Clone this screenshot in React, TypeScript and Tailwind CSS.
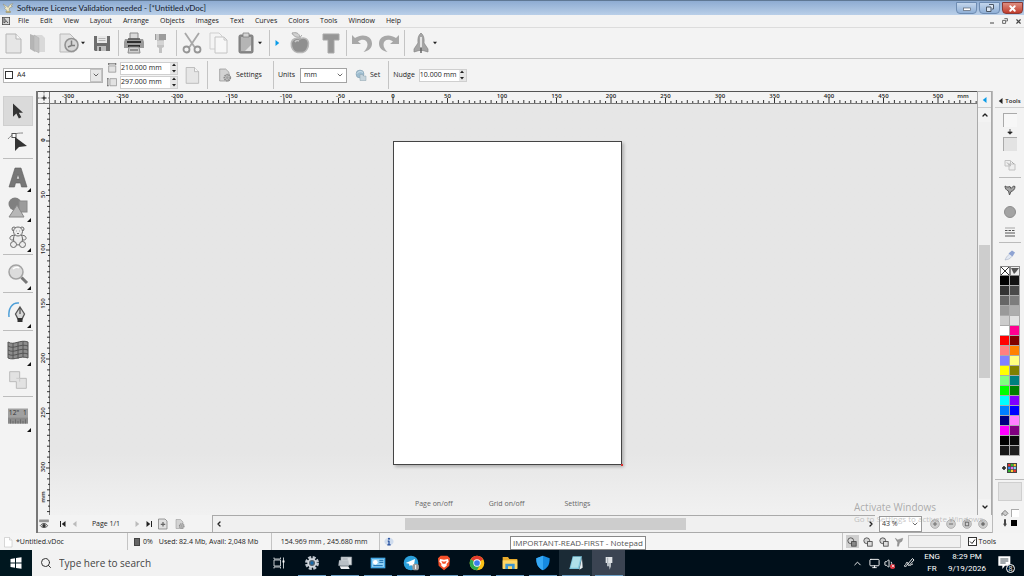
import { useState, type ReactNode } from "react";
import { Search, ChevronUp, ChevronDown, ChevronLeft, ChevronRight, X, Monitor, Volume1 } from "lucide-react";

// pixels per millimetre at 43 % zoom
const MM = 1.09;

const menus = ["File", "Edit", "View", "Layout", "Arrange", "Objects", "Images", "Text", "Curves", "Colors", "Tools", "Window", "Help"];

const swatches = [
    "#000000", "#141414", "#333333", "#4a4a4a", "#666666", "#7d7d7d", "#999999", "#adadad", "#cccccc", "#e2e2e2",
    "#ffffff", "#ff0090", "#ff0000", "#800000", "#ff8080", "#ff8000", "#8080ff", "#ffff80", "#ffff00", "#808000",
    "#80ff80", "#008080", "#00ff00", "#008000", "#00ffff", "#8000ff", "#0080ff", "#0000ff", "#000080", "#ff80ff",
    "#ff00ff", "#800080", "#000000", "#0a0a0a", "#171717", "#202020",
];

function Svg({ children, className = "size-6", box = "0 0 24 24" }: { children: ReactNode; className?: string; box?: string }) {
    return (
        <svg viewBox={box} className={`shrink-0 ${className}`} fill="none" aria-hidden="true">
            {children}
        </svg>
    );
}

/* ---------- icons ---------- */

const PageIcon = ({ className = "size-6", fill = "#e6e6e6" }: { className?: string; fill?: string }) => (
    <Svg className={className}>
        <path d="M5 3h10l5 5v14H5z" fill={fill} stroke="#b5b5b5" />
        <path d="M15 3v5h5" fill="#f6f6f6" stroke="#b5b5b5" />
    </Svg>
);

const OpenIcon = () => (
    <Svg>
        <path d="M4 3l5 2v16l-5-3z" fill="#b5b5b5" />
        <path d="M8 4h8l3 3v14H9z" fill="#d9d9d9" />
        <path d="M8 4l5 3v15l-5-3z" fill="#c2c2c2" stroke="#adadad" strokeWidth=".5" />
    </Svg>
);

const TemplateIcon = () => (
    <Svg>
        <path d="M3 3h10l4 4v14H3z" fill="#e4e4e4" stroke="#b9b9b9" />
        <circle cx="14.5" cy="14" r="6.5" fill="#d6d6d6" stroke="#949494" strokeWidth="1.6" />
        <path d="M14.5 9.5v5H18M14.5 14.5L11 16" stroke="#7d7d7d" strokeWidth="1.5" />
    </Svg>
);

const SaveIcon = () => (
    <Svg>
        <path d="M4 5h16v15H5l-1-1z" fill="#6d6d6d" />
        <path d="M7 5h10v7H7z" fill="#e9e9e9" />
        <path d="M8.5 7.5h7M8.5 9.5h7" stroke="#b5b5b5" />
        <path d="M7 15h9v5H7z" fill="#bcbcbc" />
        <path d="M9 16h2v4H9z" fill="#5d5d5d" />
    </Svg>
);

const PrintIcon = () => (
    <Svg>
        <path d="M8 2h8v6H8z" fill="#dadada" stroke="#8a8a8a" />
        <path d="M3 8h18l1 3v6H2v-6z" fill="#9b9b9b" />
        <path d="M5 10h14v2H5zM6 14h12v2H6z" fill="#2e2e2e" />
        <path d="M7 16h10l1 6H6z" fill="#cdcdcd" stroke="#8a8a8a" />
        <path d="M8 19h8" stroke="#555" />
        <path d="M6 8h12" stroke="#555" strokeWidth="1.5" />
    </Svg>
);

const MarkerIcon = () => (
    <Svg>
        <path d="M6 3h11v6H6z" fill="#9c9c9c" />
        <path d="M7 3h3v6H7z" fill="#c9c9c9" />
        <path d="M8 9h7v7l-2 1v5h-3v-5l-2-1z" fill="#c2c2c2" />
        <path d="M8 11h7M8 13h7" stroke="#e6e6e6" />
    </Svg>
);

const CutIcon = () => (
    <Svg>
        <path d="M5 2l9.5 14M19 2L9.5 16" stroke="#a8a8a8" strokeWidth="1.8" />
        <circle cx="6.5" cy="18.5" r="3" stroke="#959595" strokeWidth="1.8" />
        <circle cx="17.5" cy="18.5" r="3" stroke="#959595" strokeWidth="1.8" />
    </Svg>
);

const CopyIcon = () => (
    <Svg>
        <path d="M3 2h9l3 3v13H3z" fill="#f4f4f4" stroke="#cfcfcf" />
        <path d="M8 6h9l3 3v13H8z" fill="#f7f7f7" stroke="#c4c4c4" />
        <path d="M17 6v3h3" stroke="#c4c4c4" />
    </Svg>
);

const PasteIcon = () => (
    <Svg>
        <rect x="5" y="4" width="14" height="18" rx="1.5" fill="#8a8a8a" stroke="#7a7a7a" />
        <path d="M7 6h10v14H7z" fill="#b5b5b5" />
        <path d="M9 2h6v4H9z" fill="#d5d5d5" stroke="#808080" strokeWidth=".8" />
        <path d="M17 14v6h-6z" fill="#e2e2e2" />
    </Svg>
);

const AppleIcon = () => (
    <Svg>
        <path d="M12 8c3-2 8-1 8.5 4 .3 5-3 9.5-6 9.5h-5C6 21.5 2.800 17 3.300 12 4 7.500 9 6.500 12 8z" fill="#8f8f8f" stroke="#b8b8b8" strokeWidth="1.5" />
        <path d="M7 11c1-1.500 3-1.500 4-1" stroke="#c9c9c9" strokeWidth="1.5" />
        <path d="M12 8c0-2 1-3 2-4M12 6C9 7 5 5 4 2c4-1 7 0 8 4z" fill="#d0d0d0" stroke="#a5a5a5" />
    </Svg>
);

const TextIcon = () => (
    <Svg>
        <path d="M4 3h16v6h-5v13H9V9H4z" fill="#969696" stroke="#a9a9a9" />
    </Svg>
);

const TurnIcon = ({ flip = false }: { flip?: boolean }) => (
    <Svg className={flip ? "size-6 -scale-x-100" : "size-6"}>
        <path d="M2 4v9h9L8 10.500c4-3 9.500-2 9.500 3 0 2.500-1.500 5-4 7.500 5.500-1 8.500-4.500 8.500-8.500C22 4.500 12 2 5 7z" fill="#a8a8a8" />
    </Svg>
);

const RocketIcon = () => (
    <Svg>
        <path d="M12 2c2.500 2 3.500 5 3 10l4 6v3l-5-1.500h-4L5 21v-3l4-6C8.500 7 9.500 4 12 2z" fill="#a5a5a5" stroke="#858585" strokeWidth=".7" />
        <path d="M11 6h2v10h-2z" fill="#e4e4e4" />
        <path d="M12 17v5" stroke="#666" strokeWidth="1.5" />
    </Svg>
);

const GearPage = ({ className = "size-5" }: { className?: string }) => (
    <Svg className={className}>
        <path d="M4 3h9l5 5v13H4z" fill="#d3d3d3" stroke="#8c8c8c" />
        <circle cx="15.5" cy="16" r="4.5" fill="#c2c2c2" stroke="#8c8c8c" strokeWidth="2.5" strokeDasharray="2.2 1" />
        <circle cx="15.5" cy="16" r="2" fill="#a2a2a2" />
    </Svg>
);

const SetIcon = () => (
    <Svg className="size-3">
        <circle cx="10" cy="10" r="8" fill="#9dbccf" stroke="#7e9aaa" />
        <path d="M4 9c3-5 9-4 12-2" stroke="#d5e6ef" strokeWidth="2" />
        <path d="M10 11h5l2 3h5v9H10z" fill="#c6d4dc" stroke="#8aa0ac" />
    </Svg>
);

const Down = () => (
    <Svg className="size-1" box="0 0 6 6"><path d="M0 1h6L3 5z" fill="#222" /></Svg>
);

const Tri = ({ dir, color = "#222", className = "size-1.5" }: { dir: "l" | "r" | "u" | "d"; color?: string; className?: string }) => {
    const d = { l: "M6 0v8L1 4z", r: "M2 0v8l5-4z", u: "M0 6h8L4 1z", d: "M0 2h8L4 7z" }[dir];
    return <Svg className={className} box="0 0 8 8"><path d={d} fill={color} /></Svg>;
};

const More = () => (
    <Svg className="absolute bottom-0 right-0.5 size-1" box="0 0 4 4"><path d="M4 0v4H0z" fill="#111" /></Svg>
);

/* ---------- small controls ---------- */

function ToolButton({ label, children, menu, className = "w-6" }: { label: string; children: ReactNode; menu?: boolean; className?: string }) {
    return (
        <button type="button" title={label} aria-label={label} className={`flex shrink-0 items-center justify-center hover:bg-[#e3e3e3] ${className}`}>
            {children}
            {menu && <Down />}
        </button>
    );
}

const Sep = () => <span className="h-full w-px shrink-0 bg-[#c4c4c4]" />;

function Spinner({ label, value, className = "w-[58px]" }: { label: string; value: string; className?: string }) {
    const [v, setV] = useState(value);
    const step = (n: number) => setV(`${(parseFloat(v) + n).toFixed(3)} mm`);
    return (
        <div className={`flex h-[13px] border border-[#cfcfcf] bg-white ${className}`}>
            <input aria-label={label} value={v} onChange={(e) => setV(e.target.value)} className="min-w-0 flex-1 bg-white outline-none" />
            <div className="flex w-[7px] flex-col items-center justify-center gap-0.5 bg-[#e6e6e6]">
                <button type="button" aria-label={`Increase ${label}`} onClick={() => step(1)} className="flex"><Tri dir="u" className="size-1" /></button>
                <button type="button" aria-label={`Decrease ${label}`} onClick={() => step(-1)} className="flex"><Tri dir="d" className="size-1" /></button>
            </div>
        </div>
    );
}

/* ---------- top bars ---------- */

function TitleBar() {
    return (
        <header className="flex h-[15px] items-center border-t border-[#5f7894] bg-linear-to-b from-[#8eacd2] to-[#b9cfe8] pl-0.5 pr-px text-[#1b2736]">
            <Svg className="size-3">
                <path d="M2 4l7 4 3 3 4-6 6-2-4 5 3 1-6 3-1 5 4 3H7l3-3-5-4 2-2z" fill="#efe9c8" stroke="#8c8a72" />
                <path d="M8 20h9" stroke="#a38d48" strokeWidth="2" />
            </Svg>
            <h1 className="flex-1 pl-[3px] font-[Lato] text-[8px] font-medium">Software License Validation needed - [*Untitled.vDoc]</h1>
            <div className="flex gap-0.5">
                <button type="button" aria-label="Minimize" className="flex h-3 w-[21px] items-center justify-center rounded-b-sm border border-[#6e8cb2] bg-linear-to-b from-[#c3d6ec] to-[#8fafd6]">
                    <Svg className="size-2.5" box="0 0 10 10"><rect x="1.5" y="5" width="7" height="2.5" fill="#fff" stroke="#59626e" strokeWidth=".7" /></Svg>
                </button>
                <button type="button" aria-label="Restore" className="flex h-3 w-[21px] items-center justify-center rounded-b-sm border border-[#6e8cb2] bg-linear-to-b from-[#c3d6ec] to-[#8fafd6]">
                    <Svg className="size-2.5" box="0 0 10 10"><path d="M4 1.500h4.500V6H7M1.500 4H6v4.500H1.500z" fill="#dce6f2" stroke="#4b5664" /></Svg>
                </button>
                <button type="button" aria-label="Close" className="flex h-3 w-[21px] items-center justify-center rounded-b-sm border border-[#8b3a35] bg-linear-to-b from-[#dd8d80] to-[#c0392b] text-white">
                    <X size={9} strokeWidth={5} />
                </button>
            </div>
        </header>
    );
}

function MenuBar() {
    return (
        <nav className="flex h-[13px] items-center border-b border-[#dcdcdc] px-0.5">
            <Svg className="size-2">
                <rect x="1" y="1" width="22" height="22" fill="#d5d5d5" stroke="#444" strokeWidth="2.5" />
                <path d="M6 4l12 14M6 4v14l6-5" stroke="#555" strokeWidth="3" />
            </Svg>
            <ul className="flex flex-1 gap-[11px] pl-2">
                {menus.map((m) => (
                    <li key={m}><button type="button" className="hover:underline">{m}</button></li>
                ))}
            </ul>
            <div className="flex items-center gap-[7px] text-[#444]">
                <button type="button" aria-label="Minimize document"><Svg className="size-1.5" box="0 0 6 6"><path d="M1 5h4" stroke="#444" /></Svg></button>
                <button type="button" aria-label="Restore document"><Svg className="size-1.5" box="0 0 10 10"><path d="M4 1h5v4H7M1 4h5v5H1z" stroke="#444" strokeWidth="1.3" /></Svg></button>
                <button type="button" aria-label="Close document"><X size={7} strokeWidth={4} /></button>
            </div>
        </nav>
    );
}

function ToolBar() {
    return (
        <div role="toolbar" aria-label="Standard" className="flex h-[31px] items-stretch border-b border-[#c6c6c6] py-0.5 pl-px">
            <div className="flex gap-px pr-1">
                <ToolButton label="New"><PageIcon /></ToolButton>
                <ToolButton label="Open"><OpenIcon /></ToolButton>
                <ToolButton label="Templates" menu className="ml-1.5 w-7"><TemplateIcon /></ToolButton>
                <ToolButton label="Save" className="ml-1 w-6"><SaveIcon /></ToolButton>
            </div>
            <Sep />
            <div className="flex gap-[3px] px-[3px]">
                <ToolButton label="Print"><PrintIcon /></ToolButton>
                <ToolButton label="Highlight"><MarkerIcon /></ToolButton>
            </div>
            <Sep />
            <div className="flex gap-[3px] pl-[3px] pr-[7px]">
                <ToolButton label="Cut"><CutIcon /></ToolButton>
                <ToolButton label="Copy"><CopyIcon /></ToolButton>
                <ToolButton label="Paste" menu className="w-7"><PasteIcon /></ToolButton>
            </div>
            <Sep />
            <div className="flex gap-[7px] px-[3px]">
                <ToolButton label="More tools" className="w-2"><Tri dir="r" color="#0a9ce8" /></ToolButton>
                <ToolButton label="Vectorize"><AppleIcon /></ToolButton>
                <ToolButton label="Recognize text"><TextIcon /></ToolButton>
            </div>
            <Sep />
            <div className="flex gap-[3px] px-[3px]">
                <ToolButton label="Undo"><TurnIcon /></ToolButton>
                <ToolButton label="Redo"><TurnIcon flip /></ToolButton>
            </div>
            <Sep />
            <ToolButton label="Launch" menu className="ml-1 w-7"><RocketIcon /></ToolButton>
        </div>
    );
}

function PropertyBar() {
    return (
        <div role="toolbar" aria-label="Page properties" className="flex h-8 items-center py-0.5">
            <div className="ml-[3px] flex h-[15px] w-[100px] items-center border border-[#b5b5b5] bg-white">
                <span className="ml-px h-2 w-2 border border-[#333]" />
                <select aria-label="Page size" className="h-full flex-1 appearance-none bg-transparent pl-1 outline-none"><option>A4</option></select>
                <span className="pointer-events-none flex h-full w-3 items-center justify-center border border-[#c4c4c4] bg-[#e8e8e8]"><ChevronDown size={8} /></span>
            </div>
            <div className="ml-1 flex flex-col gap-1">
                <Svg className="size-2.5"><path d="M4 7h17v15H4z" fill="#e2e2e2" stroke="#999" strokeWidth="2" /><path d="M4 2h17M4 0v5M21 0v5" stroke="#555" strokeWidth="2" /></Svg>
                <Svg className="size-2.5"><path d="M7 4h16v17H7z" fill="#e2e2e2" stroke="#999" strokeWidth="2" /><path d="M2 4v17M0 4h4M0 21h4" stroke="#555" strokeWidth="2" /></Svg>
            </div>
            <div className="ml-[3px] flex flex-col gap-px">
                <Spinner label="Page width" value="210.000 mm" />
                <Spinner label="Page height" value="297.000 mm" />
            </div>
            <ToolButton label="Orientation" className="ml-0.5 mr-[3px] w-6"><PageIcon className="size-5" /></ToolButton>
            <Sep />
            <button type="button" className="flex items-center gap-[3px] pl-[9px] pr-[11px]"><GearPage className="size-4" />Settings</button>
            <Sep />
            <label htmlFor="units" className="pl-1 pr-[5px]">Units</label>
            <div className="relative flex h-[15px] w-[47px] items-center border border-[#a3a3a3] bg-white">
                <select id="units" className="h-full w-full appearance-none bg-transparent pl-[3px] outline-none"><option>mm</option><option>cm</option></select>
                <ChevronDown size={8} className="pointer-events-none absolute right-0.5" />
            </div>
            <button type="button" className="flex items-center gap-[3px] px-2"><SetIcon />Set</button>
            <Sep />
            <span className="px-1">Nudge</span>
            <Spinner label="Nudge" value="10.000 mm" className="w-12" />
        </div>
    );
}

/* ---------- left toolbox ---------- */

const toolGroups: { label: string; h: string; more?: boolean; icon: ReactNode }[][] = [
    [
        { label: "Select", h: "h-[30px]", icon: <Svg className="size-5"><path d="M6 3v16l4-4 3 6 3-1.500-3-5.500h5z" fill="#333" /></Svg> },
        { label: "Edit nodes", h: "h-[30px]", icon: <Svg><path d="M2 10c4-5 8-6 15-6" stroke="#888" /><rect x="6" y="4.5" width="4" height="4" fill="#fff" stroke="#555" /><path d="M9 8v14l4-4 8-1z" fill="#333" /></Svg> },
    ],
    [
        { label: "Text", h: "h-[30px]", more: true, icon: <Svg><path d="M9 3h6l6 19h-5.500l-1-4H9.500l-1 4H3zM12 9l-1.500 5h3z" fill="#777" stroke="#5d5d5d" strokeWidth=".6" /></Svg> },
        { label: "Shapes", h: "h-[30px]", more: true, icon: <Svg><circle cx="9" cy="9" r="6.5" fill="#808080" /><rect x="13" y="6" width="8" height="11" fill="#9b9b9b" stroke="#888" /><path d="M11 10l7 12H3z" fill="#b7b7b7" stroke="#888" /></Svg> },
        { label: "Cliparts", h: "h-[30px]", more: true, icon: (
            <Svg>
                <g stroke="#6a6a6a" fill="#ededed">
                    <circle cx="8" cy="4" r="2" /><circle cx="16" cy="4" r="2" />
                    <path d="M8 10l-3 1c-2 2-1 4 1 4h3M16 10l3 1c2 2 1 4-1 4h-3" />
                    <ellipse cx="12" cy="14" rx="4.5" ry="6" /><circle cx="12" cy="6.5" r="4.5" />
                    <circle cx="7.5" cy="19.5" r="3" /><circle cx="16.5" cy="19.5" r="3" />
                    <path d="M10 6h.5M13.500 6h.5M11 8.500h2" />
                </g>
            </Svg>
        ) },
    ],
    [
        { label: "Zoom", h: "h-8", more: true, icon: <Svg><circle cx="10" cy="10" r="7" fill="#dcdcdc" stroke="#a3a3a3" strokeWidth="1.5" /><path d="M7 7c2-2 5-2 6-1" stroke="#fff" strokeWidth="1.5" /><path d="M15.500 15.500l5.500 5.500" stroke="#777" strokeWidth="3" /></Svg> },
    ],
    [
        { label: "Pen", h: "h-8", more: true, icon: <Svg><path d="M3 17C2 9 6 2 13 3" stroke="#4e9fd8" strokeWidth="1.5" /><path d="M14 7l4.500 7-2.500 5h-4l-2.500-5z" fill="#d8d8d8" stroke="#555" strokeWidth="1.3" /><path d="M14 8v6" stroke="#333" /><path d="M11.500 18h5v4h-5z" fill="#333" /></Svg> },
    ],
    [
        { label: "Envelope", h: "h-8", more: true, icon: <Svg><path d="M2 4c6 4 12-3 20 0v16c-8-3-13 3-20 0z" fill="#8d8d8d" stroke="#555" /><path d="M2 8c6 4 12-3 20 0M2 12c6 4 12-3 20 0M2 16c6 4 12-3 20 0M7 5v16M12 4v17M17 3v16" stroke="#4e4e4e" strokeWidth=".9" /></Svg> },
        { label: "Combine", h: "h-7", icon: <Svg className="size-5"><path d="M2 2h12v8h8v12H10v-8H2z" fill="#e2e2e2" stroke="#b2b2b2" /><path d="M10 10h4v4" stroke="#c6c6c6" /></Svg> },
    ],
];

function ToolBox() {
    return (
        <aside className="flex w-9 flex-col px-[3px] pt-[5px]">
            {toolGroups.map((group, i) => (
                <div key={i} className="mb-[3px] border-b border-[#bdbdbd] pb-0.5">
                    {group.map((t) => (
                        <button
                            key={t.label}
                            type="button"
                            title={t.label}
                            aria-label={t.label}
                            className={`relative flex w-[30px] items-center justify-center ${t.h} ${t.label === "Select" ? "border border-[#cfcfcf] bg-[#dadada]" : ""}`}
                        >
                            {t.icon}
                            {t.more && <More />}
                        </button>
                    ))}
                </div>
            ))}
            <button type="button" aria-label="Measure" className="relative flex h-8 w-[30px] items-center justify-center">
                <Svg className="size-5">
                    <path d="M0 3h24v18H0z" fill="#a0a0a0" />
                    <path d="M0 14h24v7H0z" fill="#8a8a8a" />
                    <path d="M3 21v-5M6 21v-3M9 21v-5M12 21v-3M15 21v-5M18 21v-3M21 21v-5" stroke="#666" />
                    <text x="1" y="11" fontSize="8" fill="#333">12"</text>
                    <text x="18" y="11" fontSize="8" fill="#333">1</text>
                </Svg>
                <More />
            </button>
        </aside>
    );
}

/* ---------- rulers and canvas ---------- */

function HRuler() {
    const ticks = Array.from({ length: 178 }, (_, i) => (i - 62) * 5);
    return (
        <svg className="h-3 w-full" aria-hidden="true">
            {ticks.map((t) => (
                <path key={t} d={`M${343 + t * MM} ${t % 50 === 0 ? 7 : t % 10 === 0 ? 9 : 10}V12`} stroke="#333" />
            ))}
            {ticks.filter((t) => t % 50 === 0 && t <= 500).map((t) => (
                <text key={t} x={(t < 0 ? 345 : 343) + t * MM} y="7" textAnchor="middle" fontSize="6" fontWeight={t === 0 ? 700 : 600} fill="#222">{t}</text>
            ))}
            <text x="98.5%" y="7" textAnchor="middle" fontSize="6" fontWeight="600" fill="#222">mm</text>
        </svg>
    );
}

function VRuler() {
    const ticks = Array.from({ length: 75 }, (_, i) => (i - 6) * 5);
    return (
        <svg className="h-full w-3" aria-hidden="true">
            {ticks.map((t) => (
                <path key={t} d={`M${t % 50 === 0 ? 8 : t % 10 === 0 ? 9 : 10} ${37 + t * MM}H12`} stroke="#333" />
            ))}
            {ticks.filter((t) => t % 50 === 0 && t <= 300).map((t) => (
                <text key={t} transform={`translate(7 ${36 + t * MM}) rotate(-90)`} textAnchor="middle" fontSize="6" fontWeight={t === 0 ? 700 : 600} fill="#222">{t}</text>
            ))}
            <text transform="translate(7 393) rotate(-90)" textAnchor="middle" fontSize="6" fontWeight="600" fill="#222">mm</text>
        </svg>
    );
}

function Workspace() {
    return (
        <div className="flex min-w-0 flex-1 flex-col border-l-2 border-[#777]">
            <div className="flex min-h-0 flex-1">
                <div className="flex min-w-0 flex-1 flex-col">
                    <div className="flex h-[13px] border-y border-t-[#555] border-b-[#777]">
                        <div className="w-3 shrink-0 border-r border-[#777]">
                            <Svg className="size-3"><path d="M12 0v24M0 12h24" stroke="#777" strokeWidth="2" strokeDasharray="3 2" /><path d="M8 12h8M12 8v8" stroke="#222" strokeWidth="2" /></Svg>
                        </div>
                        <div className="flex min-w-0 flex-1 items-end"><HRuler /></div>
                    </div>
                    <div className="flex min-h-0 flex-1">
                        <div className="w-3 shrink-0 border-r border-[#777]"><VRuler /></div>
                        <div className="relative min-w-0 flex-1 overflow-hidden bg-linear-to-b from-[#e6e6e6] from-85% to-[#f1f1f1]">
                            <div className="absolute left-[343px] top-[37px] h-[324px] w-[229px] border border-[#444] bg-white shadow-[2px_2px_3px_#b0b0b0]" />
                            <span className="absolute left-[571px] top-[360px] size-0.5 bg-[#d33]" />
                            <div className="absolute left-[365px] top-[395px] flex gap-9 text-[#666]">
                                <button type="button">Page on/off</button>
                                <button type="button">Grid on/off</button>
                                <button type="button" className="ml-1">Settings</button>
                            </div>
                        </div>
                    </div>
                </div>
                <div className="flex w-[15px] flex-col items-stretch border-x border-t border-[#aaa]">
                    <button type="button" aria-label="Collapse panel" className="flex h-4 items-center justify-center border-b border-[#ccc]"><Tri dir="l" color="#0a9ce8" /></button>
                    <button type="button" aria-label="Scroll up" className="flex h-3.5 items-center justify-center"><ChevronUp size={8} strokeWidth={4} /></button>
                    <div className="flex flex-1 flex-col bg-[#f0f0f0] px-px">
                        <div className="flex-122" />
                        <div className="flex-132 bg-[#cdcdcd]" />
                        <div className="flex-120" />
                    </div>
                    <button type="button" aria-label="Scroll down" className="flex h-4 items-center justify-center"><ChevronDown size={8} strokeWidth={4} /></button>
                </div>
            </div>
            <PageBar />
        </div>
    );
}

function PageBar() {
    return (
        <div className="flex h-[18px] items-center border-b border-[#aaa]">
            <button type="button" aria-label="View mode" className="ml-px"><Svg className="size-2.5"><path d="M1 2h22v5H1z" fill="#999" stroke="#777" /><path d="M3 16c5-7 13-7 18 0-5 6-13 6-18 0z" fill="#ddd" stroke="#444" strokeWidth="2" /><circle cx="12" cy="16" r="4" fill="#333" /></Svg></button>
            <button type="button" aria-label="First page" className="ml-[11px] flex items-center"><span className="h-1.5 w-px bg-[#222]" /><Tri dir="l" /></button>
            <button type="button" aria-label="Previous page" className="ml-[5px]"><Tri dir="l" color="#bbb" /></button>
            <span className="w-14 text-center">Page 1/1</span>
            <button type="button" aria-label="Next page"><Tri dir="r" color="#bbb" /></button>
            <button type="button" aria-label="Last page" className="ml-[5px] flex items-center"><Tri dir="r" /><span className="h-1.5 w-px bg-[#222]" /></button>
            <button type="button" aria-label="Add page" className="ml-[5px]"><Svg className="size-3"><path d="M3 2h13l4 4v16H3z" fill="#e0e0e0" stroke="#7d7d7d" strokeWidth="1.5" /><path d="M12 8v9M7.500 12.500h9" stroke="#666" strokeWidth="2.5" /></Svg></button>
            <button type="button" aria-label="Page setup" className="ml-[5px]"><GearPage className="size-3" /></button>
            <div className="ml-[26px] flex h-full flex-1 items-center border-l border-t border-[#aaa] bg-[#f0f0f0]">
                <button type="button" aria-label="Scroll left" className="pl-0.5"><ChevronLeft size={8} strokeWidth={4} /></button>
                <div className="flex h-3 flex-1">
                    <div className="flex-181" />
                    <div className="flex-281 bg-[#cdcdcd]" />
                    <div className="flex-180" />
                </div>
                <button type="button" aria-label="Scroll right"><ChevronRight size={8} strokeWidth={4} /></button>
            </div>
            <div className="relative ml-1 mr-2 flex h-4 w-[43px] items-center border border-[#999] bg-white">
                <select aria-label="Zoom" className="h-full w-full appearance-none bg-transparent pl-0.5 text-[#333] outline-none"><option>43 %</option><option>100 %</option></select>
                <ChevronDown size={8} className="pointer-events-none absolute right-0.5" />
            </div>
            <div className="flex gap-1.5 pr-1">
                {["M7 12h10M12 7v10", "M7 12h10", "M8 8h8v8H8z", "M7 12h10M12 7v10M9 9l6 6M15 9l-6 6"].map((d, i) => (
                    <button key={i} type="button" aria-label={["Zoom in", "Zoom out", "Fit page", "Fit all"][i]}>
                        <Svg className="size-2.5"><circle cx="12" cy="12" r="10.5" fill="#cecece" stroke="#a9a9a9" strokeWidth="2" /><path d={d} stroke="#707070" strokeWidth="2.5" /></Svg>
                    </button>
                ))}
            </div>
        </div>
    );
}

/* ---------- right panel ---------- */

function RightPanel() {
    return (
        <aside className="flex w-8 flex-col items-center border-l border-[#bbb] pl-0.5">
            <button type="button" className="flex h-[17px] w-full items-center justify-center gap-px border-b border-[#d0d0d0] pt-1 text-[6px] font-semibold"><Tri dir="l" />Tools</button>
            <span className="mt-[5px] size-3.5 border-l border-t border-[#aaa] bg-[#f7f7f7]" />
            <Svg className="my-0.5 size-1.5" box="0 0 8 8"><path d="M4 0v4M1 4h6L4 7z" fill="#222" stroke="#222" /></Svg>
            <span className="size-3.5 border-l border-t border-[#aaa] bg-[#e3e3e3]" />
            <button type="button" aria-label="Copy style" className="mt-2"><Svg className="size-3"><path d="M2 3h11v11H2zM10 10h12v12H10z" fill="#eee" stroke="#c2c2c2" strokeWidth="2" /><path d="M6 7l6 6M15 5l5 5" stroke="#aaa" strokeWidth="2" /></Svg></button>
            <span className="mt-1.5 h-px w-[22px] bg-[#bbb]" />
            <button type="button" aria-label="Brush" className="mt-1.5"><Svg className="size-3"><path d="M2 4c4 3 8 2 10 1l2 4 5-5 3 1c0 6-4 9-8 10l-3 7-2-8C5 13 2 9 2 4z" fill="#a5a5a5" stroke="#555" strokeWidth="2" /></Svg></button>
            <button type="button" aria-label="Fill" className="mt-2.5 size-3 rounded-full border border-[#8d8d8d] bg-[#a3a3a3]" />
            <button type="button" aria-label="Line style" className="mt-2"><Svg className="size-3"><path d="M2 4h20" stroke="#555" /><path d="M2 9h20" stroke="#555" strokeWidth="2" strokeDasharray="5 2" /><path d="M2 14h20M2 20h20" stroke="#555" strokeWidth="2" /></Svg></button>
            <span className="mt-1 h-px w-[22px] bg-[#bbb]" />
            <button type="button" aria-label="Color picker" className="mt-1.5"><Svg className="size-3"><path d="M2 22l3-6 7-7 5 5-7 6z" fill="#e3e9f3" stroke="#9aa6bd" /><path d="M9 9l7-6 6 4-5 8z" fill="#8ea3d2" /></Svg></button>
            <div className="mt-[5px] flex">
                <button type="button" aria-label="No color" className="size-2.5 border border-[#888] bg-white"><Svg className="size-2" box="0 0 8 8"><path d="M0 0l8 8M8 0L0 8" stroke="#333" /></Svg></button>
                <button type="button" aria-label="Style picker" className="size-2.5 border border-[#888] bg-[#eee]"><Svg className="size-2" box="0 0 8 8"><path d="M0 1h8L5 5 3 7z" fill="#555" /></Svg></button>
            </div>
            <div className="grid grid-cols-2">
                {swatches.map((c, i) => (
                    <button key={i} type="button" aria-label={`Color ${c}`} className="size-2.5 border-b border-r border-[#aaa]" style={{ backgroundColor: c }} />
                ))}
            </div>
            <button type="button" aria-label="Add color" className="mt-[7px] flex items-center gap-px">
                <Svg className="size-1" box="0 0 8 8"><path d="M4 0v8M0 4h8" stroke="#222" strokeWidth="3" /></Svg>
                <Svg className="size-2.5" box="0 0 9 9">
                    <path d="M0 0h9v9H0z" fill="#444" />
                    <path d="M1 1h2v2H1zM6 6h2v2H6z" fill="#e33" /><path d="M3.500 1h2v2h-2zM1 6h2v2H1z" fill="#3b3" /><path d="M6 1h2v2H6zM3.500 6h2v2h-2z" fill="#fc3" /><path d="M1 3.500h2v2H1z" fill="#38f" /><path d="M3.500 3.500h2v2h-2z" fill="#e6e" /><path d="M6 3.500h2v2H6z" fill="#8df" />
                </Svg>
            </button>
            <span className="mt-1.5 h-px w-full bg-[#bbb]" />
            <span className="mt-0.5 h-[19px] w-6 border border-[#cfcfcf] bg-[#e3e3e3]" />
            <div className="mt-2 grid grid-cols-2 items-center gap-0.5">
                <Svg className="size-2"><path d="M4 12l8-8 9 9-8 8z" fill="#ccc" stroke="#555" strokeWidth="2" /><path d="M3 12v8" stroke="#666" strokeWidth="3" /></Svg>
                <button type="button" aria-label="Fill color" className="size-2 border-l border-t border-[#aaa] bg-white" />
                <Svg className="size-2"><path d="M9 1h6v11l2 4-5 7-5-7 2-4z" fill="#444" /></Svg>
                <button type="button" aria-label="Stroke color" className="size-1.5 bg-black" />
            </div>
        </aside>
    );
}

/* ---------- status bar and taskbar ---------- */

function StatusBar() {
    return (
        <footer className="relative flex h-[17px] items-center bg-[#f4f4f4]">
            <PageIcon className="ml-0.5 size-3" fill="#fff" />
            <span className="w-[113px] pl-0.5">*Untitled.vDoc</span>
            <Sep />
            <span className="ml-1.5 h-2 w-1.5 border border-[#444] bg-[#666]" />
            <span className="ml-[3px]">0%</span>
            <span className="ml-1.5 w-28">Used: 82.4 Mb, Avail: 2,048 Mb</span>
            <Sep />
            <span className="w-[107px] pl-[9px]">154.969 mm , 245.680 mm</span>
            <Sep />
            <Svg className="ml-1 size-2.5"><path d="M1 11a11 9 0 0 0 22 0 11 9 0 0 0-22 0l4 12" fill="#cfdcee" /><path d="M12 9v10M9 10h3M8 19h8" stroke="#244f9e" strokeWidth="3" /><circle cx="12" cy="4" r="2.5" fill="#244f9e" /></Svg>
            <span className="flex-1" />
            <Sep />
            <div className="flex items-center gap-[3px] pl-[3px]">
                {["Group", "Overlap", "Intersect"].map((s, i) => (
                    <button key={s} type="button" aria-label={s} className={`flex size-[13px] items-center justify-center ${i === 0 ? "bg-[#cfcfcf]" : ""}`}>
                        <Svg className="size-2.5"><circle cx="9" cy="9" r="7" fill="#d5d5d5" stroke="#444" strokeWidth="2" /><rect x="11" y="11" width="11" height="11" fill={i === 0 ? "#888" : "#ddd"} stroke="#444" strokeWidth="2" /></Svg>
                    </button>
                ))}
                <button type="button" aria-label="Paint"><Svg className="size-2.5"><path d="M3 3l6 4 12-4-2 7-6 4-2 8H8l1-9z" fill="#999" stroke="#777" /></Svg></button>
            </div>
            <span className="ml-1 h-[13px] w-[53px] border border-[#c4c4c4] bg-[#f0f0f0]" />
            <label className="ml-[7px] mr-7 flex items-center gap-0.5">
                <span className="relative flex size-[9px]">
                    <input type="checkbox" defaultChecked className="peer size-[9px] appearance-none border border-[#333] bg-white" />
                    <Svg className="pointer-events-none absolute left-0 top-0 hidden size-[9px] peer-checked:block" box="0 0 9 9"><path d="M2 4.500l2 2 3-4" stroke="#222" /></Svg>
                </span>
                Tools
            </label>
            <div role="tooltip" className="absolute bottom-0 left-[510px] z-10 border border-[#888] bg-white px-0.5 font-[Open_Sans] text-[8px] leading-3 font-normal text-[#555]">IMPORTANT-READ-FIRST - Notepad</div>
        </footer>
    );
}

const apps: { name: string; bg?: string; icon: ReactNode }[] = [
    { name: "Settings", icon: <><circle cx="12" cy="12" r="8" stroke="#bfc7cf" strokeWidth="5" strokeDasharray="4.2 2.08" /><circle cx="12" cy="12" r="7" fill="#d3d9df" /><circle cx="12" cy="12" r="3.5" fill="#1769aa" stroke="#53616e" strokeWidth="2" /></> },
    { name: "Remote", icon: <><path d="M6 3h16v12H6z" fill="#d9dde0" stroke="#8b949b" /><path d="M3 8h14l1 8H2z" fill="#b9c0c6" /><path d="M4 17h13l2 4H6z" fill="#eef0f2" /><path d="M8 6h8" stroke="#77818a" /></> },
    { name: "Control Panel", icon: <><path d="M1 4h22v16H1z" fill="#46a9e6" /><path d="M3 6h18v12H3z" fill="#8fd0f5" /><circle cx="8" cy="11" r="3.5" fill="#fff" /><path d="M14 8h6M14 11h6M5 16h14" stroke="#1769aa" strokeWidth="1.5" /></> },
    { name: "Telegram", icon: <><circle cx="12" cy="12" r="11" fill="#2ba0db" /><path d="M4 12l14-6-2 12-4-3-2 2-1-4z" fill="#fff" /><rect x="14" y="13" width="10" height="10" rx="4" fill="#9a9a9a" /><path d="M19 15v6" stroke="#fff" strokeWidth="1.5" /></> },
    { name: "Brave", icon: <><path d="M7 1h10l4 4-1 11-8 7-8-7L3 5z" fill="#f4502a" /><path d="M6 6l6 1 6-1 1 4-3 3v3l-4 3-4-3v-3l-3-3z" fill="#fff" /><path d="M8 9l4 1 4-1-2 4h-4z" fill="#f4502a" /></> },
    { name: "Chrome", icon: <><circle cx="12" cy="12" r="11" fill="#fbc116" /><path d="M12 12L2.500 6.500a11 11 0 0 1 19 0z" fill="#e33b2e" /><path d="M12 12L2.500 6.500A11 11 0 0 0 12 23l4.500-8z" fill="#2da94f" /><circle cx="12" cy="12" r="5.5" fill="#fff" /><circle cx="12" cy="12" r="4.3" fill="#3b7ded" /></> },
    { name: "File Explorer", icon: <><path d="M1 3h8l2 3h12v14H1z" fill="#e8ab2c" /><path d="M1 8h22v13H1z" fill="#ffd765" /><path d="M5 21v-8h14v8h-4v-4H9v4z" fill="#3d96d1" /></> },
    { name: "Windows Security", icon: <><path d="M12 1l10 4c0 9-2 14-10 18C4 19 2 14 2 5z" fill="#168ae0" /><path d="M12 1v22C4 19 2 14 2 5z" fill="#37a9f5" /></> },
    { name: "Notepad", bg: "bg-[#1b2b36]", icon: <><path d="M7 2h14l-4 19H2z" fill="#7cc4da" /><path d="M8 3h11l-4 16H4z" fill="#aee0ea" /><path d="M21 4l1 15-5 3z" fill="#e7eef0" /></> },
    { name: "VDoc", bg: "bg-[#3b4452]", icon: <><path d="M7 3h10v9H7z" fill="#e0e3e6" /><path d="M9 12h6v5l-2 5-1-5H9z" fill="#b9bfc5" /><path d="M10 4v8" stroke="#8a929a" /></> },
];

function TaskBar() {
    return (
        <div className="flex h-[26px] items-stretch bg-[#000f1a] font-[Open_Sans] text-white">
            <button type="button" aria-label="Start" className="flex w-8 items-center justify-center bg-[#00171f]">
                <Svg className="size-3"><path d="M1 4l9-1.500V11H1zM12 2l11-1.500V11H12zM1 13h9v8.500L1 20zM12 13h11v10.500L12 22z" fill="#fff" /></Svg>
            </button>
            <div className="flex w-[230px] items-center bg-[#f2f2f2] pl-2 text-[#333]">
                <Search size={12} strokeWidth={2} />
                <input aria-label="Search" placeholder="Type here to search" className="min-w-0 flex-1 bg-transparent pl-[7px] text-[10px] font-normal outline-none placeholder:text-[#444]" />
            </div>
            <button type="button" aria-label="Task view" className="flex w-[33px] items-center justify-center">
                <Svg className="size-3"><path d="M2 6h13v12H2zM2 1v3h13V1M2 23v-3h13v3M21 1v22" stroke="#d5dade" strokeWidth="1.8" /><path d="M19 7h4v4h-4z" fill="#fff" /></Svg>
            </button>
            {apps.map((a) => (
                <button key={a.name} type="button" title={a.name} aria-label={a.name} className={`flex w-[33px] items-center justify-center ${a.bg ?? ""}`}>
                    <span className="flex h-full w-7 items-center justify-center border-b border-[#6ea2c8]"><Svg className="size-4">{a.icon}</Svg></span>
                </button>
            ))}
            <span className="flex-1" />
            <div className="flex items-center pr-[11px] text-[8px] leading-3">
                <ChevronUp size={11} />
                <Monitor size={11} className="ml-1.5" />
                <span className="relative ml-1 flex">
                    <Volume1 size={11} />
                    <span className="absolute bottom-0 right-0 flex size-[5px] items-center justify-center rounded-full bg-[#e03440]"><X size={4} strokeWidth={4} /></span>
                </span>
                <Svg className="ml-2 size-3"><path d="M2 18c6-2 3-9 7-7s-4 10-6 8M9 15L19 3l3 3-10 11zM13 17c3 0 4-3 7-3" stroke="#fff" strokeWidth="1.8" /></Svg>
                <div className="w-[34px] text-center font-[Roboto] font-normal">ENG<br />FR</div>
                <div className="flex w-9 flex-col items-center font-[Roboto] font-normal whitespace-nowrap">
                    <span>8:29 PM</span>
                    <span>9/19/2026</span>
                </div>
                <button type="button" aria-label="Notifications" className="relative ml-3 flex">
                    <Svg className="size-4"><path d="M2 2h18v14h-8l-4 5v-5H2z" fill="#fff" /><path d="M5 6h12M5 9h12M5 12h8" stroke="#1b2b36" strokeWidth="1.2" /></Svg>
                    <span className="absolute -right-0.5 -bottom-0.5 flex size-[9px] items-center justify-center rounded-full border border-white bg-[#000f1a] text-[7px]">8</span>
                </button>
            </div>
        </div>
    );
}

export default function App() {
    return (
        <div className="relative flex h-screen flex-col overflow-hidden bg-[#f3f3f3] font-['Open_Sans',sans-serif] text-[7px] leading-[10px] font-medium text-[#222]">
            <TitleBar />
            <MenuBar />
            <ToolBar />
            <PropertyBar />
            <main className="flex min-h-0 flex-1">
                <ToolBox />
                <Workspace />
                <RightPanel />
            </main>
            <StatusBar />
            <TaskBar />
            {/* Activation notice */}
            <div className="pointer-events-none absolute bottom-[51px] left-[854px] z-20 font-normal text-[#8c8c8c]/70">
                <p className="text-[10px] leading-3">Activate Windows</p>
                <p className="text-[8px] leading-3 whitespace-nowrap text-[#8c8c8c]/50">Go to Settings to activate Windows.</p>
            </div>
        </div>
    );
}
